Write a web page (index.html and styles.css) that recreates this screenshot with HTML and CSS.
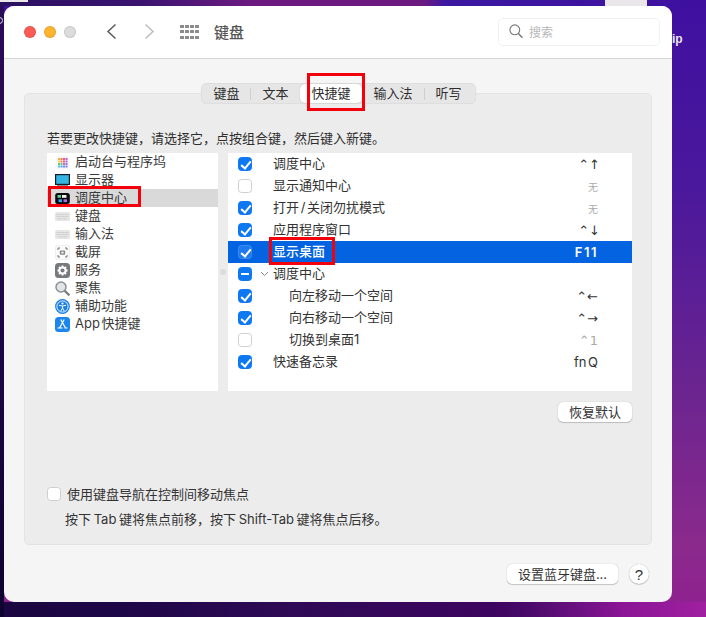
FILE: index.html
```html
<!DOCTYPE html>
<html lang="zh-CN">
<head>
<meta charset="utf-8">
<title>键盘</title>
<link rel="stylesheet" href="styles.css">
</head>
<body>
<div class="desk-bit desk-top-left"></div>
<div class="desk-bit desk-top-right"></div>
<div class="desk-ring"></div>
<div class="desk-label desk-label-ip">ip</div>
<div class="window">
  <header class="toolbar">
    <div class="lights"><i class="light red"></i><i class="light yellow"></i><i class="light gray"></i></div>
    <div class="nav">
      <svg class="chev" width="11" height="17" viewBox="0 0 11 17"><path d="M9.500 1.500 2 8.500l7.500 7" fill="none" stroke="#5c5c5c" stroke-width="1.500"/></svg>
      <svg class="chev" width="11" height="17" viewBox="0 0 11 17"><path d="M1.500 1.500 9 8.500l-7.500 7" fill="none" stroke="#bdbdbd" stroke-width="1.500"/></svg>
    </div>
    <div class="grid-btn"><i></i><i></i><i></i><i></i><i></i><i></i><i></i><i></i><i></i><i></i><i></i><i></i></div>
    <div class="title">键盘</div>
    <div class="search">
      <svg width="14" height="15" viewBox="0 0 14 15"><circle cx="5.800" cy="5.800" r="4.900" fill="none" stroke="#777" stroke-width="1.100"/><path d="m9.400 9.600 4 4.200" stroke="#777" stroke-width="1.400" fill="none"/></svg>
      <span>搜索</span>
    </div>
  </header>
  <main class="content">
    <nav class="tabs">
      <span class="tab">键盘</span><i class="sep"></i>
      <span class="tab">文本</span><i class="sep off"></i>
      <span class="tab active">快捷键</span><i class="sep off"></i>
      <span class="tab">输入法</span><i class="sep"></i>
      <span class="tab">听写</span>
    </nav>
    <section class="panel">
      <p class="intro">若要更改快捷键，请选择它，点按组合键，然后键入新键。</p>
      <div class="lists">
        <ul class="cats">
          <li><svg class="ico" viewBox="0 0 15 15"><rect x="0.500" y="0.500" width="14" height="14" rx="3" fill="#f7f7f7"/><rect x="3" y="3" width="2" height="2" fill="#f0b040"/><rect x="5.500" y="3" width="2" height="2" fill="#ee7a50"/><rect x="8" y="3" width="2" height="2" fill="#e85a8a"/><rect x="10.500" y="3" width="2" height="2" fill="#c060d0"/><rect x="3" y="5.500" width="2" height="2" fill="#f2cc4a"/><rect x="5.500" y="5.500" width="2" height="2" fill="#f08a50"/><rect x="8" y="5.500" width="2" height="2" fill="#ea5a70"/><rect x="10.500" y="5.500" width="2" height="2" fill="#a868e0"/><rect x="3" y="8" width="2" height="2" fill="#70c860"/><rect x="5.500" y="8" width="2" height="2" fill="#58c8a0"/><rect x="8" y="8" width="2" height="2" fill="#e868a8"/><rect x="10.500" y="8" width="2" height="2" fill="#8878e8"/><rect x="3" y="10.500" width="2" height="2" fill="#60c0d8"/><rect x="5.500" y="10.500" width="2" height="2" fill="#58a8e8"/><rect x="8" y="10.500" width="2" height="2" fill="#6890f0"/><rect x="10.500" y="10.500" width="2" height="2" fill="#8080f0"/></svg>启动台与程序坞</li>
          <li><svg class="ico" viewBox="0 0 15 15"><rect x="0.600" y="1.600" width="13.800" height="9.800" fill="#35b6e2" stroke="#161c26" stroke-width="1.200"/><rect x="2" y="12.500" width="11" height="1.300" fill="#161c26"/></svg>显示器</li>
          <li class="sel"><svg class="ico" viewBox="0 0 15 15"><rect x="0.200" y="2" width="14.600" height="11" rx="2.500" fill="#0a0a0e"/><rect x="2.500" y="4" width="3.500" height="2.800" fill="#5fd08c"/><rect x="7" y="4" width="4.500" height="2.800" fill="#f1f1f1"/><rect x="3.500" y="8.300" width="3.500" height="2.800" fill="#3ea4ee"/><rect x="8.500" y="8.300" width="3.500" height="2.800" fill="#b26be0"/></svg>调度中心</li>
          <li><svg class="ico" viewBox="0 0 15 15"><rect x="0" y="3" width="15" height="9" rx="1.500" fill="#e6e6e6"/><path d="M1.500 5.500h12M1.500 7.500h12M2.500 9.800h10" stroke="#c6c6c6" stroke-width="1" stroke-dasharray="1 .6"/></svg>键盘</li>
          <li><svg class="ico" viewBox="0 0 15 15"><rect x="0" y="3" width="15" height="9" rx="1.500" fill="#e6e6e6"/><path d="M1.500 5.500h12M1.500 7.500h12M2.500 9.800h10" stroke="#c6c6c6" stroke-width="1" stroke-dasharray="1 .6"/></svg>输入法</li>
          <li><svg class="ico" viewBox="0 0 15 15"><rect x="0.300" y="0.300" width="14.400" height="14.400" rx="3" fill="#fafafa" stroke="#e2e2e2" stroke-width=".6"/><path d="M3 5V3h2M10 3h2v2M12 10v2h-2M5 12H3v-2" fill="none" stroke="#666" stroke-width=".9"/><rect x="4.800" y="5.500" width="5.400" height="4.200" rx="1" fill="#888"/><circle cx="7.500" cy="7.600" r="1.200" fill="#eee"/></svg>截屏</li>
          <li><svg class="ico" viewBox="0 0 15 15"><rect x="0" y="0" width="15" height="15" rx="3.500" fill="#77797d"/><circle cx="7.500" cy="7.500" r="3.100" fill="none" stroke="#fff" stroke-width="2"/><path d="M7.500 2.500v2M7.500 10.500v2M2.500 7.500h2M10.500 7.500h2M4 4l1.400 1.400M9.600 9.600 11 11M11 4 9.600 5.400M5.400 9.600 4 11" stroke="#fff" stroke-width="1.800"/></svg>服务</li>
          <li><svg class="ico" viewBox="0 0 15 15"><circle cx="6" cy="6" r="5" fill="#e2e5e7" stroke="#8b8f92" stroke-width="1.500"/><path d="m9.700 9.700 4.700 4.700" stroke="#777a7d" stroke-width="2.200"/></svg>聚焦</li>
          <li><svg class="ico" viewBox="0 0 15 15"><circle cx="7.500" cy="7.500" r="7.400" fill="#1a80e6"/><circle cx="7.500" cy="7.500" r="5.600" fill="none" stroke="#fff" stroke-width=".9"/><circle cx="7.500" cy="4.500" r="1.100" fill="#fff"/><path d="M4 6.300 7.500 7 11 6.300M7.500 7v2l-1.700 3M7.500 9l1.700 3" fill="none" stroke="#fff" stroke-width="1"/></svg>辅助功能</li>
          <li><svg class="ico" viewBox="0 0 15 15"><rect x="0" y="0" width="15" height="15" rx="3.500" fill="#1b86ec"/><path d="M9.200 2.500 4.500 11M5.800 2.500 10.500 11M2.500 11h5M9.500 11h3" fill="none" stroke="#fff" stroke-width="1.200"/></svg>App 快捷键</li>
        </ul>
        <div class="splitter"><i></i></div>
        <ul class="shortcuts">
          <li><i class="cb on"></i><span class="slot"></span><span class="name">调度中心</span><span class="key vert">⌃↑</span></li>
          <li><i class="cb"></i><span class="slot"></span><span class="name">显示通知中心</span><span class="key none">无</span></li>
          <li><i class="cb on"></i><span class="slot"></span><span class="name">打开 / 关闭勿扰模式</span><span class="key none">无</span></li>
          <li><i class="cb on"></i><span class="slot"></span><span class="name">应用程序窗口</span><span class="key vert">⌃↓</span></li>
          <li class="sel"><i class="cb on"></i><span class="slot"></span><span class="name">显示桌面</span><span class="key fkey">F11</span></li>
          <li><i class="cb mixed"></i><span class="slot"><svg class="disc" width="9" height="6" viewBox="0 0 9 6"><path d="m1 1 3.500 3.500L8 1" fill="none" stroke="#888" stroke-width="1"/></svg></span><span class="name">调度中心</span></li>
          <li><i class="cb on"></i><span class="slot"></span><span class="name sub">向左移动一个空间</span><span class="key">⌃←</span></li>
          <li><i class="cb on"></i><span class="slot"></span><span class="name sub">向右移动一个空间</span><span class="key">⌃→</span></li>
          <li><i class="cb"></i><span class="slot"></span><span class="name sub">切换到桌面1</span><span class="key dim">⌃1</span></li>
          <li><i class="cb on"></i><span class="slot"></span><span class="name">快速备忘录</span><span class="key fnkey">fn Q</span></li>
        </ul>
      </div>
      <div class="restore-row"><button class="btn">恢复默认</button></div>
      <label class="nav-check"><i class="cb"></i><span>使用键盘导航在控制间移动焦点</span></label>
      <p class="hint">按下 Tab 键将焦点前移，按下 Shift-Tab 键将焦点后移。</p>
    </section>
    <footer class="footer">
      <button class="btn btn-bt">设置蓝牙键盘...</button>
      <button class="help">?</button>
    </footer>
  </main>
  <div class="mark mark-tab"></div>
  <div class="mark mark-cat"></div>
  <div class="mark mark-row"></div>
</div>
</body>
</html>
```
FILE: styles.css
```css
* { box-sizing: border-box; }
html, body { height: 100%; }
body {
  margin: 0;
  overflow: hidden;
  position: relative;
  font-family: "Inter", "Noto Sans CJK SC", "Liberation Sans", sans-serif;
  font-size: 13px;
  color: #333;
  background-color: #4a159c;
  background-image:
    linear-gradient(90deg, #2a1060 0, #3a1470 20%, #6d1a80 36%, #6d1a80 60%, #3b18a0 63%, #3f10a0 100%),
    linear-gradient(180deg, #2c0c58 0, #1e0748 50%, #0e0330 100%),
    linear-gradient(90deg, #1a0640 0, #1e0748 18%, #2e0a55 40%, #3d0560 70%, #4a0a6a 75%, #8a1596 88%, #a020a0 100%),
    linear-gradient(180deg, #3f10a0 0, #4a189c 30%, #6a2490 62%, #8a2a8c 88%, #902090 100%);
  background-repeat: no-repeat;
  background-size: 100% 6px, 4px 100%, 100% 15px, 100% 100%;
  background-position: top left, top left, bottom left, top left;
  padding: 6px 0 0 4px;
}
.desk-bit { position: absolute; background: #e9e7e9; }
.desk-top-left { left: 0; top: 0; width: 28px; height: 2px; }
.desk-top-right { left: 605px; top: 0; width: 42px; height: 6px; }
.desk-ring { position: absolute; left: -4px; top: 17px; width: 7px; height: 7px; border-radius: 50%; border: 1.500px solid #ddd; }
.desk-label { position: absolute; color: #e8e4ee; font: bold 12px "Liberation Sans", sans-serif; }
.desk-label-ip { left: 672px; top: 32px; }
.window {
  position: relative;
  width: 668px;
  height: 596px;
  border-radius: 10px;
  background: #f5f5f5;
  overflow: hidden;
}
.toolbar {
  height: 53px;
  background: #fff;
  border-bottom: 1px solid #d6d6d6;
  display: flex;
  align-items: center;
  padding: 0 12px 1px 20px;
}
.lights { display: flex; gap: 8px; }
.light { width: 12px; height: 12px; border-radius: 50%; border: .5px solid rgba(0,0,0,.1); }
.red { background: #fc5b57; }
.yellow { background: #fdb52f; }
.gray { background: #dcdcdc; }
.nav { display: flex; margin-left: 30px; gap: 27px; }
.chev { display: block; }
.grid-btn {
  margin-left: 25px;
  display: grid;
  grid-template-columns: repeat(4, 4px);
  grid-auto-rows: 3px;
  gap: 2.500px 1px;
}
.grid-btn i { background: #8c8c8c; }
.title { margin-left: 15px; font-size: 15px; font-weight: 500; color: #555; }
.search {
  margin-left: auto;
  width: 162px;
  height: 28px;
  border: 1px solid #efefef;
  border-radius: 5px;
  display: flex;
  align-items: center;
  padding-left: 10px;
  gap: 6px;
}
.search span { font-size: 12px; color: #b8b8b8; }
.content { padding-top: 24px; display: flex; flex-direction: column; }
.tabs {
  position: relative;
  z-index: 1;
  align-self: center;
  display: flex;
  align-items: center;
  height: 21px;
  padding: 0 2px 0 0;
  margin: 0 0 -11px 1px;
  background: #e6e6e6;
  border: 1px solid #dedede;
  border-radius: 5px;
  font-size: 13px;
  color: #2e2e2e;
}
.tab { padding: 0 11px; height: 19px; line-height: 18px; }
.tab.active { background: #fff; border-radius: 5px; box-shadow: 0 0 1px rgba(0,0,0,.3); }
.sep { width: 1px; height: 12px; background: #cfcfcf; }
.sep.off { background: transparent; }
.panel {
  margin: 0 20px;
  height: 452px;
  background: #ececec;
  border: 1px solid #e3e3e3;
  border-radius: 5px;
  padding: 35px 19px 0 22px;
}
.intro { margin: 0 0 6px; height: 18px; line-height: 18px; color: #2e2e2e; }
.lists { display: flex; height: 238px; }
ul { list-style: none; margin: 0; padding: 0; background: #fff; border: 0; }
.cats { width: 171px; word-spacing: -2px; }
.cats li { height: 18px; display: flex; align-items: center; padding: 0 0 2px 8px; line-height: 16px; color: #3a3a3a; }
.cats li.sel { background: #d9d9d9; }
.ico { width: 15px; height: 15px; margin: 2px 5px 0 0; flex: none; }
.splitter { width: 10px; display: flex; align-items: center; justify-content: center; padding-bottom: 1px; }
.splitter i { width: 6px; height: 6px; border-radius: 50%; background: #dcdcdc; }
.shortcuts { flex: 1; }
.shortcuts li { height: 22px; display: flex; align-items: center; padding: 0 34px 0 10px; color: #333; }
.shortcuts li.sel { background: #0363e1; color: #fff; }
.cb {
  width: 14px;
  height: 14px;
  flex: none;
  position: relative;
  border-radius: 3.500px;
  background: #fff;
  border: 1px solid #cfcfcf;
}
.cb.on, .cb.mixed { background: #0d78f2; border-color: #0d78f2; }
.cb.on::after {
  content: "";
  position: absolute;
  left: 4px;
  top: 1px;
  width: 4px;
  height: 8px;
  border: solid #fff;
  border-width: 0 2px 2px 0;
  transform: rotate(40deg);
}
.cb.mixed::after {
  content: "";
  position: absolute;
  left: 2px;
  top: 5px;
  width: 8px;
  height: 2px;
  background: #fff;
}
.sel .cb.on { background: #1f79ee; border-color: #3d8cf2; }
.slot { width: 21px; flex: none; display: flex; justify-content: flex-end; padding-right: 4px; }
.disc { display: block; }
.name { margin-bottom: 2px; line-height: 18px; word-spacing: -2px; }
.name.sub { margin-left: 16px; }
.sel .name { font-weight: 500; }
.key { margin-left: auto; font-family: "DejaVu Sans", "Liberation Sans", sans-serif; font-size: 13px; color: #333; }
.key.vert { margin-right: -2px; }
.key.none { font-family: "Noto Sans CJK SC", sans-serif; font-size: 10px; color: #aaa; }
.key.dim { color: #aaa; }
.key.fnkey { font-family: "Inter", sans-serif; word-spacing: -2px; }
.key.fkey { font-family: "Inter", sans-serif; font-weight: 600; font-size: 13px; color: #fff; letter-spacing: 1.500px; margin-bottom: 1px; }
.restore-row { display: flex; justify-content: flex-end; margin-top: 11px; }
.btn {
  font: inherit;
  color: #333;
  height: 20px;
  line-height: 18px;
  padding: 0 11px;
  border: 0;
  border-radius: 5px;
  background: #fff;
  box-shadow: 0 0 1px rgba(0,0,0,.3), 0 1px 1px rgba(0,0,0,.18);
}
.nav-check { display: flex; align-items: center; gap: 6px; margin-top: 65px; height: 14px; color: #333; }
.nav-check span { line-height: 14px; }
.hint { margin: 9px 0 0 18px; line-height: 18px; color: #333; word-spacing: -1px; }
.footer { display: flex; justify-content: flex-end; align-items: center; gap: 11px; padding: 19px 23px 0 0; }
.btn-bt { width: 111px; padding: 0; }
.help {
  width: 20px;
  height: 20px;
  padding: 0;
  border: 0;
  border-radius: 50%;
  background: #fff;
  color: #333;
  font: 500 15px "Liberation Sans", sans-serif;
  box-shadow: 0 0 1px rgba(0,0,0,.3), 0 1px 1px rgba(0,0,0,.18);
}
.mark { position: absolute; border: 3px solid #f4000b; z-index: 5; }
.mark-tab { left: 303px; top: 67px; width: 58px; height: 38px; }
.mark-cat { left: 44px; top: 180px; width: 93px; height: 21px; }
.mark-row { left: 265px; top: 231px; width: 66px; height: 28px; }
```
